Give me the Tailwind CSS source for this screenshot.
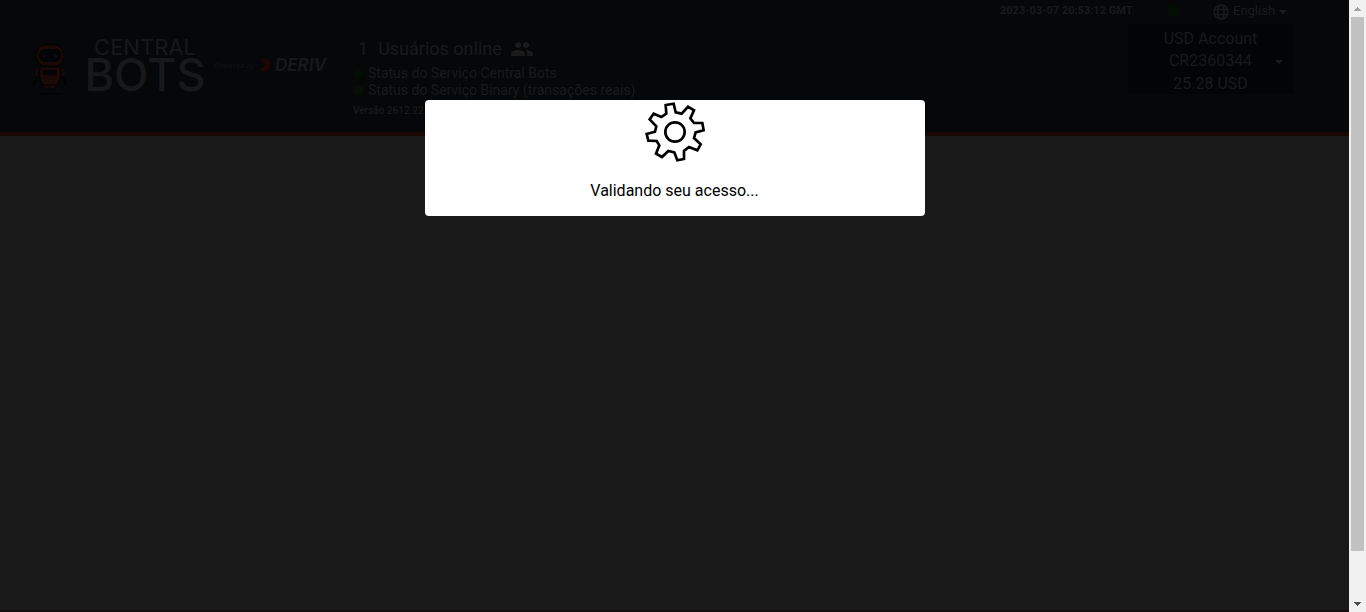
<!DOCTYPE html>
<html lang="pt-BR">
<head>
<meta charset="utf-8">
<meta name="viewport" content="width=device-width, initial-scale=1">
<title>Central Bots</title>
<script src="https://cdn.jsdelivr.net/npm/@tailwindcss/browser@4"></script>
</head>
<body class="flex h-screen overflow-hidden bg-[#1a1a1a] font-['Roboto',sans-serif] text-[#1a1a1a]">
<div class="relative flex min-w-0 flex-1 flex-col">
  <header class="flex h-34 shrink-0 items-start border-b-4 border-[#1a0705] bg-[#050709] pr-14">
    <a href="#" class="flex items-center pt-7 pl-8" aria-label="Central Bots">
      <svg class="h-[68px] w-9" viewBox="0 0 36 68" fill="none">
        <path d="M18 6v10" stroke="#0e0a0a"/>
        <circle cx="18" cy="7" r="1" fill="#160908"/>
        <path d="M12 17q6-4 12 0z" fill="#1a0906" stroke="#020203"/>
        <rect x="3" y="23" width="30" height="9" rx="3" fill="#1a0906" stroke="#020203"/>
        <rect x="5" y="17" width="26" height="21" rx="8" fill="#1a0906" stroke="#020203"/>
        <rect x="7" y="21" width="22" height="13" rx="6" fill="#030405"/>
        <circle cx="12" cy="28" r="1" fill="#1a1616"/><circle cx="24" cy="28" r="1" fill="#1a1616"/>
        <path d="M7 41Q3 43 5 48M29 41q4 2 2 7" stroke="#1a0906" stroke-width="2"/>
        <path d="M5 48L2 57M31 48l3 9" stroke="#020203" stroke-width="2"/>
        <path d="M8 39h20q2 10-2 17l-4 5h-8l-4-5Q6 49 8 39z" fill="#1a0906" stroke="#020203"/>
        <rect x="11" y="42" width="14" height="5" rx="2" fill="#030405"/>
        <path d="M11 57h14M18 57v4M7 66h22" stroke="#020203"/>
      </svg>
    </a>
    <div class="flex w-[146px] flex-col items-center pt-9 pl-2 font-['Inter',sans-serif] text-[#171819]">
      <span class="text-[22px] leading-[22px]">CENTRAL</span>
      <span class="text-[45px] leading-[34px] font-medium">BOTS</span>
    </div>
    <div class="flex w-[135px] items-center gap-1 pt-[56px]">
      <span class="font-['Open_Sans',sans-serif] text-[8px] leading-[18px] whitespace-nowrap text-[#141516] italic">Powered by</span>
      <svg class="h-3 w-3 shrink-0" viewBox="0 0 12 12" fill="#1c0506"><path d="M2 0h5c4 0 5 2 5 5 0 5-2 7-6 7H0l5-5z"/></svg>
      <span class="font-['Inter',sans-serif] text-[17px] leading-[18px] font-bold text-[#171819] italic">DERIV</span>
    </div>
    <div class="min-w-0 flex-1 pt-[38px] pl-1">
      <div class="flex h-[22px] items-center gap-2 pl-[5px] text-lg"><span>1</span><span class="pl-[2px]">Usuários online</span>
        <svg class="h-6 w-6" viewBox="0 0 24 24" fill="currentColor"><path d="M16 11c1.66 0 2.99-1.34 2.99-3S17.66 5 16 5s-3 1.34-3 3 1.34 3 3 3zm-8 0c1.66 0 2.99-1.34 2.99-3S9.66 5 8 5 5 6.340 5 8s1.340 3 3 3zm0 2c-2.330 0-7 1.170-7 3.500V19h14v-2.500c0-2.330-4.670-3.500-7-3.500zm8 0c-.29 0-.62.020-.97.050 1.160.840 1.970 1.970 1.970 3.450V19h6v-2.500c0-2.330-4.670-3.500-7-3.500z"/></svg>
      </div>
      <ul class="pt-[5px] text-sm leading-[17px]">
        <li class="flex items-center gap-1"><i class="h-[11px] w-[11px] rounded-full bg-[#020d03]"></i>Status do Serviço Central Bots</li>
        <li class="flex items-center gap-1"><i class="h-[11px] w-[11px] rounded-full bg-[#060e05]"></i>Status do Serviço Binary (transações reais)</li>
      </ul>
      <p class="pt-1 text-[10px] leading-4 font-medium">Versão 2612.22.1</p>
    </div>
    <div class="w-[293px] shrink-0">
      <div class="flex h-6 items-center">
        <time class="w-[167px] pb-[2px] text-[11px] font-bold">2023-03-07 20:53:12 GMT</time>
        <i class="mr-[33px] mb-[2px] h-3 w-[13px] rounded-full bg-[#020e03]"></i>
        <button class="flex items-center gap-1 text-[13px] whitespace-nowrap">
          <svg class="h-4 w-4" viewBox="0 0 16 16" fill="none" stroke="currentColor" stroke-width="1.500"><circle cx="8" cy="8" r="7"/><ellipse cx="8" cy="8" rx="3" ry="7"/><path d="M1 5.500h14M1 10.500h14"/></svg>
          <span class="pb-[2px]">English</span>
          <svg class="h-1 w-2" viewBox="0 0 8 4" fill="currentColor"><path d="M0 0h8L4 4z"/></svg>
        </button>
      </div>
      <button class="ml-auto flex h-[70px] w-[165px] items-center bg-[#030408] pr-[10px] text-base">
        <span class="flex-1 pt-[5px] pl-[18px] leading-[22px]"><span class="block">USD Account</span><span class="block">CR2360344</span><span class="block pt-px">25.28 USD</span></span>
        <svg class="mt-[6px] h-1 w-2" viewBox="0 0 8 4" fill="currentColor"><path d="M0 0h8L4 4z"/></svg>
      </button>
    </div>
  </header>
  <main class="flex-1"></main>
  <div class="h-[2px] bg-[#150d10]"></div>
  <div role="dialog" aria-label="Validando seu acesso" class="absolute inset-x-0 top-[100px] mx-auto flex w-[500px] flex-col items-center rounded bg-white pt-[2px] pb-[13px] text-black">
    <svg class="h-15 w-15" viewBox="0 0 180 180" fill="none" stroke="#000" stroke-width="8">
      <path d="M62 9 86 5l6 26 18 4 19-21 18 11-11 24 11 14h25l4 22-24 6-5 17 20 19-10 18-25-10-15 12v24l-20 4-9-24-18-4-19 18-18-10 10-25-8-13-25-1-5-20 25-7 4-16-20-21 12-17 23 10 15-10z"/>
      <circle cx="90" cy="90" r="29"/>
    </svg>
    <p class="pt-[17px] text-base">Validando seu acesso...</p>
  </div>
</div>
<div class="flex w-[17px] shrink-0 flex-col items-center bg-[#f1f1f1]" aria-hidden="true">
  <div class="flex h-[17px] items-center"><svg class="h-1 w-[7px]" viewBox="0 0 7 4" fill="#a3a3a3" shape-rendering="crispEdges"><path d="M3 0h1v1h1v1h1v1h1v1H0V3h1V2h1V1h1z"/></svg></div>
  <div class="w-[13px] grow-[534] bg-[#c1c1c1]"></div>
  <div class="grow-[44]"></div>
  <div class="flex h-[17px] items-center"><svg class="h-1 w-[7px]" viewBox="0 0 7 4" fill="#505050" shape-rendering="crispEdges"><path d="M0 0h7v1H6v1H5v1H4v1H3V3H2V2H1V1H0z"/></svg></div>
</div>
</body>
</html>
